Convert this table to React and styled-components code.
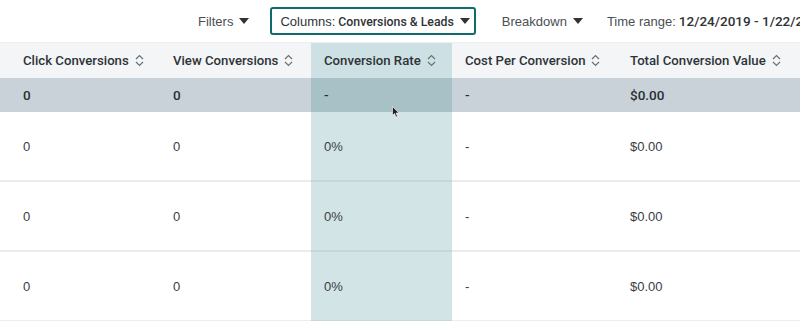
import React from 'react';
import styled, { createGlobalStyle } from 'styled-components';

const GlobalStyle = createGlobalStyle`
  body {
    margin: 0;
    background: #fff;
    font-family: "Liberation Sans", Arial, sans-serif;
    color: #2f3336;
  }
`;

const boldFont = `"Roboto", "Liberation Sans", Arial, sans-serif`;

const Page = styled.div`
  position: relative;
  width: 800px;
  height: 321px;
  overflow: hidden;
  white-space: nowrap;
`;

const Toolbar = styled.div`
  display: flex;
  align-items: center;
  height: 42px;
  padding-left: 198px;
  font-size: 13px;
  color: #4a4f54;
`;

const ToolButton = styled.div`
  display: flex;
  align-items: center;
  gap: 6px;
  height: 28px;
  box-sizing: border-box;
  margin-right: ${({ gap }) => gap}px;
  padding: ${({ active }) => (active ? '0 4px 0 8px' : '0')};
  border: ${({ active }) => (active ? '2.5px solid #0f6b6e' : 'none')};
  border-radius: 3px;
  color: ${({ active }) => (active ? '#2f3336' : '#4a4f54')};

  b {
    font-family: ${boldFont};
    font-size: ${({ big }) => (big ? 13.5 : 12.3)}px;
    font-weight: 500;
    color: #2f3336;
    margin-left: 3px;
  }
`;

const Caret = () => (
  <svg width="10" height="6" viewBox="0 0 10 6">
    <path d="M0 0h10L5 6z" fill="#2f3336" />
  </svg>
);

const SortIcon = () => (
  <svg width="9" height="13" viewBox="0 0 9 13">
    <path d="M1 5l3.5-3.5L8 5M1 8l3.5 3.5L8 8" fill="none" stroke="#6b7075" strokeWidth="1.2" />
  </svg>
);

const Grid = styled.div`
  display: grid;
  grid-template-columns: 160px 151px 141px 165px 183px;
  border-top: 1px solid #eceef0;
`;

const HeadCell = styled.div`
  display: flex;
  align-items: center;
  gap: 6px;
  height: 35px;
  padding-left: ${({ first }) => (first ? 23 : 13)}px;
  background: ${({ hi }) => (hi ? '#cde0e3' : '#f3f5f7')};
  font-family: ${boldFont};
  font-size: 13.2px;
  font-weight: 500;
  color: #2f3336;
`;

const SumCell = styled.div`
  display: flex;
  align-items: center;
  height: 34px;
  padding-left: ${({ first }) => (first ? 23 : 13)}px;
  background: ${({ hi }) => (hi ? '#a8c1c6' : '#cad2d9')};
  font-family: ${boldFont};
  font-size: 13.5px;
  font-weight: 500;
  color: #2a2e31;
`;

const Cell = styled.div`
  display: flex;
  align-items: center;
  height: 68px;
  padding-left: ${({ first }) => (first ? 23 : 13)}px;
  background: ${({ hi }) => (hi ? '#d3e4e7' : '#fff')};
  border-bottom: 2px solid ${({ hi }) => (hi ? '#c6d6d9' : '#ececec')};
  font-size: 13px;
  color: #3a3e42;
`;

const Cursor = styled.svg`
  position: absolute;
  left: 392px;
  top: 106px;
`;

const columns = ['Click Conversions', 'View Conversions', 'Conversion Rate', 'Cost Per Conversion', 'Total Conversion Value'];
const summary = ['0', '0', '-', '-', '$0.00'];
const row = ['0', '0', '0%', '-', '$0.00'];
const HI = 2;

const App = () => (
  <Page>
    <GlobalStyle />
    <Toolbar>
      <ToolButton gap={21}>Filters <Caret /></ToolButton>
      <ToolButton gap={26} active>
        <span>Columns:<b>Conversions &amp; Leads</b></span> <Caret />
      </ToolButton>
      <ToolButton gap={24}>Breakdown <Caret /></ToolButton>
      <ToolButton gap={0} big>
        <span>Time range:<b>12/24/2019 - 1/22/2020</b></span>
      </ToolButton>
    </Toolbar>
    <Grid>
      {columns.map((c, i) => (
        <HeadCell key={c} first={i === 0} hi={i === HI}>
          {c} <SortIcon />
        </HeadCell>
      ))}
      {summary.map((v, i) => (
        <SumCell key={`s${i}`} first={i === 0} hi={i === HI}>{v}</SumCell>
      ))}
      {[0, 1, 2].map((r) =>
        row.map((v, i) => (
          <Cell key={`${r}-${i}`} first={i === 0} hi={i === HI}>{v}</Cell>
        ))
      )}
    </Grid>
    <Cursor width="8" height="12" viewBox="0 0 8 12">
      <path d="M0.5 0.5v9l2-2 1.5 3.5 1.5-.6-1.5-3.4h3z" fill="#222" stroke="#fff" strokeWidth="0.6" />
    </Cursor>
  </Page>
);

export default App;
